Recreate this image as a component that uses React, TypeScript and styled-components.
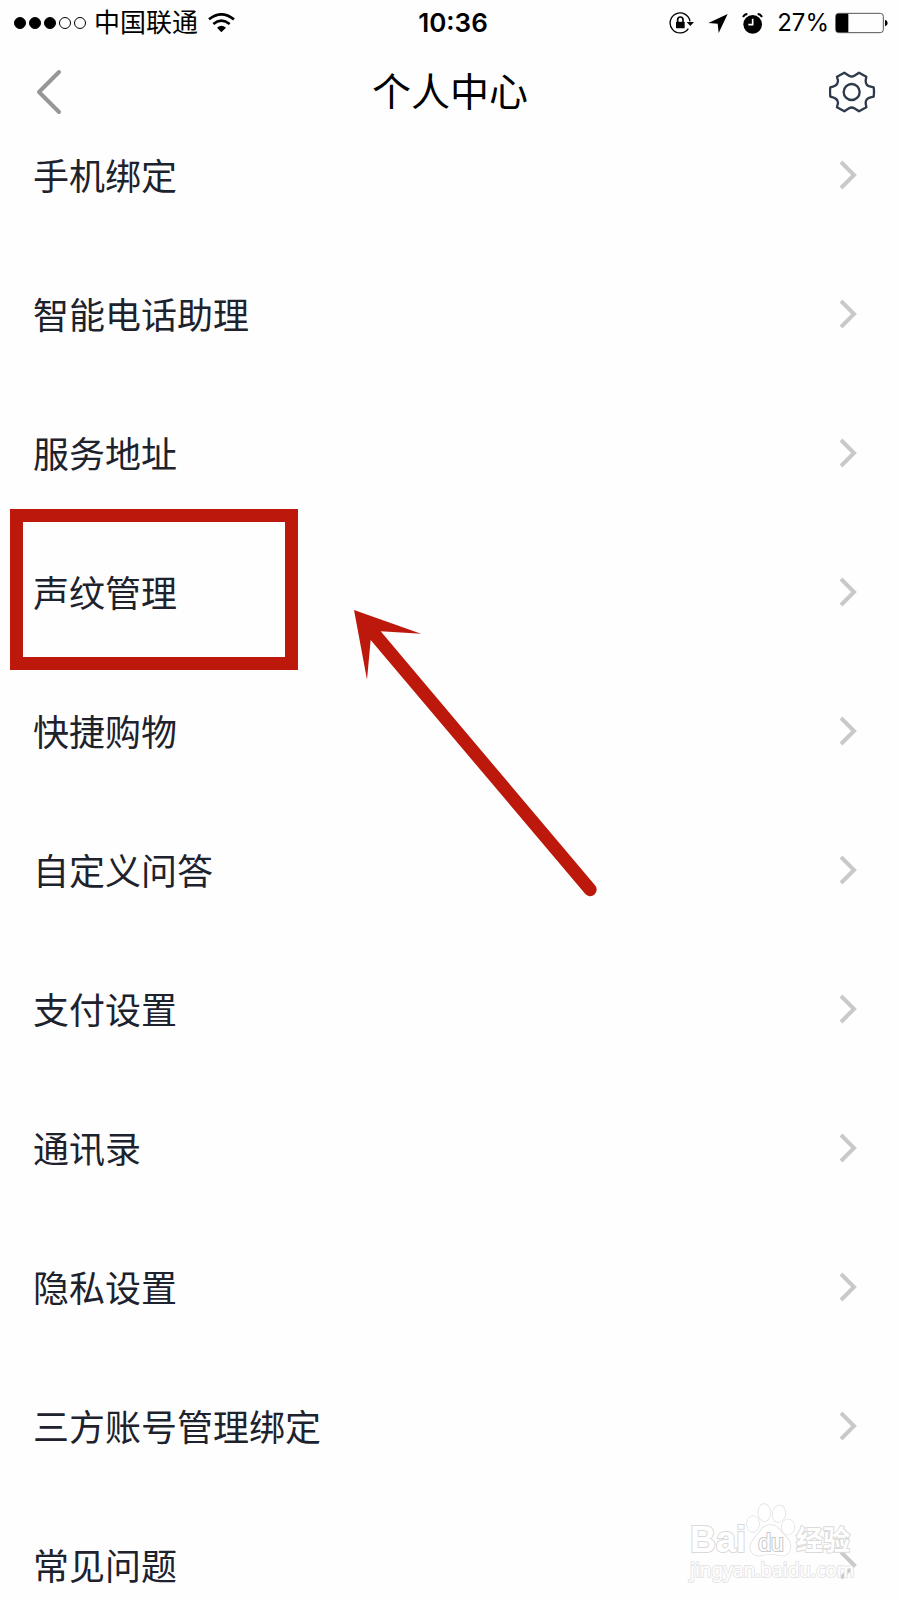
import React from "react";
import styled, { createGlobalStyle } from "styled-components";

const GlobalStyle = createGlobalStyle`
  *, *::before, *::after { box-sizing: border-box; }
  body {
    margin: 0;
    background: #fefefe;
    color: #1d222d;
    font-family: Inter, "Noto Sans CJK SC", sans-serif;
  }
`;

const Page = styled.div`
  position: relative;
  display: flex;
  flex-direction: column;
  min-height: 100vh;
  overflow: hidden;
`;

const StatusBar = styled.div`
  display: grid;
  grid-template-columns: 1fr auto 1fr;
  align-items: center;
  height: 46px;
  padding: 0 12px 0 14px;
  color: #000;
  font-size: 26px;
  line-height: 46px;
`;

const StatusGroup = styled.div<{ $end?: boolean }>`
  display: flex;
  align-items: center;
  justify-content: ${(p) => (p.$end ? "flex-end" : "flex-start")};
`;

const Signal = styled.div`
  display: flex;
  gap: 3px;
  margin-right: 8px;
`;

const Dot = styled.span<{ $filled: boolean }>`
  width: 12px;
  height: 12px;
  border: 1px solid #000;
  border-radius: 50%;
  background: ${(p) => (p.$filled ? "#000" : "transparent")};
`;

const Carrier = styled.span`
  margin-right: 10px;
`;

const Clock = styled.time`
  margin-left: 4px;
  font-weight: 600;
`;

const StatusIcons = styled.div`
  display: flex;
  align-items: center;
  gap: 14px;
  margin-right: 14px;
`;

const Percent = styled.span`
  margin-right: 6px;
  font-size: 24px;
`;

const Header = styled.header`
  display: grid;
  grid-template-columns: 1fr auto 1fr;
  align-items: center;
  height: 91px;
  padding: 0 24px;
`;

const Title = styled.h1`
  margin: 0;
  color: #000;
  font-size: 39px;
  font-weight: 400;
  line-height: 91px;
`;

const IconButton = styled.button<{ $end?: boolean }>`
  display: flex;
  justify-self: ${(p) => (p.$end ? "end" : "start")};
  padding: ${(p) => (p.$end ? "0" : "0 10px")};
  border: 0;
  background: none;
  cursor: pointer;
`;

const Menu = styled.ul`
  display: flex;
  flex-direction: column;
  gap: 68px;
  margin: 0;
  padding: 2px 0 0;
  list-style: none;
`;

const MenuItem = styled.li`
  position: relative;
`;

const MenuLink = styled.a`
  display: flex;
  align-items: center;
  justify-content: space-between;
  height: 71px;
  padding: 0 43px 0 33px;
  color: inherit;
  font-family: "Noto Sans CJK SC", sans-serif;
  font-size: 36px;
  line-height: 71px;
  text-decoration: none;
`;

const Highlight = styled.div`
  position: absolute;
  top: -47px;
  bottom: -43px;
  left: 10px;
  width: 288px;
  border: 13px solid #bc190c;
  pointer-events: none;
`;

const Arrow = styled.svg`
  position: absolute;
  z-index: 1;
  top: 54px;
  left: 354px;
  pointer-events: none;
`;

const Watermark = styled.div`
  position: absolute;
  right: 48px;
  bottom: 18px;
  width: 162px;
  color: #fff;
  font-family: "Noto Sans", "Noto Sans CJK SC", sans-serif;
  white-space: nowrap;
  pointer-events: none;
  paint-order: stroke fill;
`;

const WatermarkLogo = styled.div`
  display: flex;
  align-items: flex-end;
  height: 55px;
  font-weight: 700;
  -webkit-text-stroke: 2px #dadada;
`;

const Latin = styled.span`
  font-family: "Liberation Sans", sans-serif;
  font-size: 36px;
  line-height: 36px;
`;

const Han = styled.span`
  font-size: 27px;
  line-height: 36px;
`;

const PawBadge = styled.span`
  display: grid;
  place-items: end center;

  & > * {
    grid-area: 1 / 1;
  }
`;

const PawText = styled.span`
  font-family: "Liberation Sans", sans-serif;
  font-size: 23px;
  font-weight: 400;
  line-height: 30px;
  -webkit-text-stroke: 2px #c8c8c8;
`;

const WatermarkUrl = styled.div`
  font-size: 19px;
  line-height: 24px;
  -webkit-text-stroke: 2px #e6e6e6;
`;

const WifiIcon = () => (
  <svg width="27" height="20" viewBox="0 0 81 60" fill="none" stroke="#000" strokeWidth="8" aria-hidden="true">
    <path d="M3 19Q40-11 78 19" />
    <path d="M16 33Q40 13 65 33" />
    <path d="M27 44Q40 33 54 44L40 58Z" fill="#000" stroke="none" />
  </svg>
);

const RotationLockIcon = () => (
  <svg width="25" height="22" viewBox="0 0 75 66" fill="none" stroke="#000" strokeWidth="4" aria-hidden="true">
    <path d="M63 28A30 30 0 1 0 58 50" />
    <path d="M53 30H75L64 42Z" fill="#000" stroke="none" />
    <rect x="21" y="29" width="26" height="20" rx="2" fill="#000" stroke="none" />
    <path d="M26 30V23A8 8 0 0 1 42 23V30" strokeWidth="5" />
  </svg>
);

const LocationIcon = () => (
  <svg width="20" height="19" viewBox="0 0 60 57" aria-hidden="true">
    <path d="M59 0L32 57L29 29L1 27Z" />
  </svg>
);

const AlarmIcon = () => (
  <svg width="21" height="21" viewBox="0 0 63 63" fill="none" stroke="#000" aria-hidden="true">
    <circle cx="32" cy="34" r="28" fill="#000" stroke="none" />
    <path d="M3 12Q7 4 16 3M47 3Q56 4 60 12" strokeWidth="6" />
    <path d="M32 17V35H19" stroke="#fff" strokeWidth="5" />
  </svg>
);

const BatteryIcon = () => (
  <svg width="53" height="22" viewBox="0 0 159 66" aria-hidden="true">
    <rect x="2" y="4" width="143" height="58" rx="9" fill="none" stroke="#555" strokeWidth="3" />
    <path d="M9 5H40V61H9Q3 61 3 55V11Q3 5 9 5Z" />
    <path d="M150 23Q158 25 158 33T150 43Z" />
  </svg>
);

const BackIcon = () => (
  <svg width="28" height="46" viewBox="0 0 28 46" fill="none" stroke="#969696" strokeWidth="4" strokeLinecap="round" strokeLinejoin="round" aria-hidden="true">
    <path d="M25 3L5 23L25 43" />
  </svg>
);

const GearIcon = () => (
  <svg width="47" height="42" viewBox="0 0 141 126" fill="none" stroke="#2e394b" strokeWidth="7" strokeLinejoin="round" aria-hidden="true">
    <path d="M60 14Q68 19 76 14L90 5L112 17L110 29Q110 43 122 46L134 49Q136 63 134 77L122 80Q110 84 110 96L112 109L90 121L76 112Q68 107 60 112L46 121L24 109L27 96Q26 84 14 80L4 77Q2 63 4 49L14 46Q26 43 27 29L24 17L46 5Z" />
    <circle cx="68" cy="63" r="24" />
  </svg>
);

const ChevronIcon = () => (
  <svg width="18" height="30" viewBox="0 0 18 30" fill="none" stroke="#c9c9cb" strokeWidth="4" aria-hidden="true">
    <path d="M2 2L15 15L2 28" />
  </svg>
);

const PawIcon = () => (
  <svg width="50" height="55" viewBox="0 0 150 165" fill="#fff" stroke="#dcdcdc" strokeWidth="4" aria-hidden="true">
    <ellipse cx="21" cy="63" rx="18" ry="24" />
    <ellipse cx="55" cy="29" rx="18" ry="26" />
    <ellipse cx="99" cy="32" rx="19" ry="25" transform="rotate(8 99 32)" />
    <ellipse cx="126" cy="72" rx="19" ry="23" />
    <path d="M73 66Q91 66 104 85L128 111Q139 132 127 149Q116 162 98 156Q73 151 48 156Q27 162 17 147Q6 128 22 110L44 83Q55 66 73 66Z" />
  </svg>
);

const items = [
  "手机绑定",
  "智能电话助理",
  "服务地址",
  "声纹管理",
  "快捷购物",
  "自定义问答",
  "支付设置",
  "通讯录",
  "隐私设置",
  "三方账号管理绑定",
  "常见问题",
];

const highlighted = "声纹管理";

export default function App() {
  return (
    <Page lang="zh-CN">
      <GlobalStyle />
      <StatusBar>
        <StatusGroup>
          <Signal>
            {[0, 1, 2, 3, 4].map((i) => (
              <Dot key={i} $filled={i < 3} />
            ))}
          </Signal>
          <Carrier>中国联通</Carrier>
          <WifiIcon />
        </StatusGroup>
        <Clock>10:36</Clock>
        <StatusGroup $end>
          <StatusIcons>
            <RotationLockIcon />
            <LocationIcon />
            <AlarmIcon />
          </StatusIcons>
          <Percent>27%</Percent>
          <BatteryIcon />
        </StatusGroup>
      </StatusBar>
      <Header>
        <IconButton type="button" aria-label="返回">
          <BackIcon />
        </IconButton>
        <Title>个人中心</Title>
        <IconButton type="button" aria-label="设置" $end>
          <GearIcon />
        </IconButton>
      </Header>
      <Menu>
        {items.map((label) => (
          <MenuItem key={label}>
            <MenuLink href="#">
              {label}
              <ChevronIcon />
            </MenuLink>
            {label === highlighted && (
              <>
                <Highlight />
                <Arrow width="243" height="287" viewBox="43 60 729 861" fill="#bc190c" aria-hidden="true">
                  <path d="M43 60L244 131L123 124L766 886A19 19 0 0 1 737 912L93 150L82 269Z" />
                </Arrow>
              </>
            )}
          </MenuItem>
        ))}
      </Menu>
      <Watermark>
        <WatermarkLogo>
          <Latin>Bai</Latin>
          <PawBadge>
            <PawIcon />
            <PawText>du</PawText>
          </PawBadge>
          <Han>经验</Han>
        </WatermarkLogo>
        <WatermarkUrl>jingyan.baidu.com</WatermarkUrl>
      </Watermark>
    </Page>
  );
}
